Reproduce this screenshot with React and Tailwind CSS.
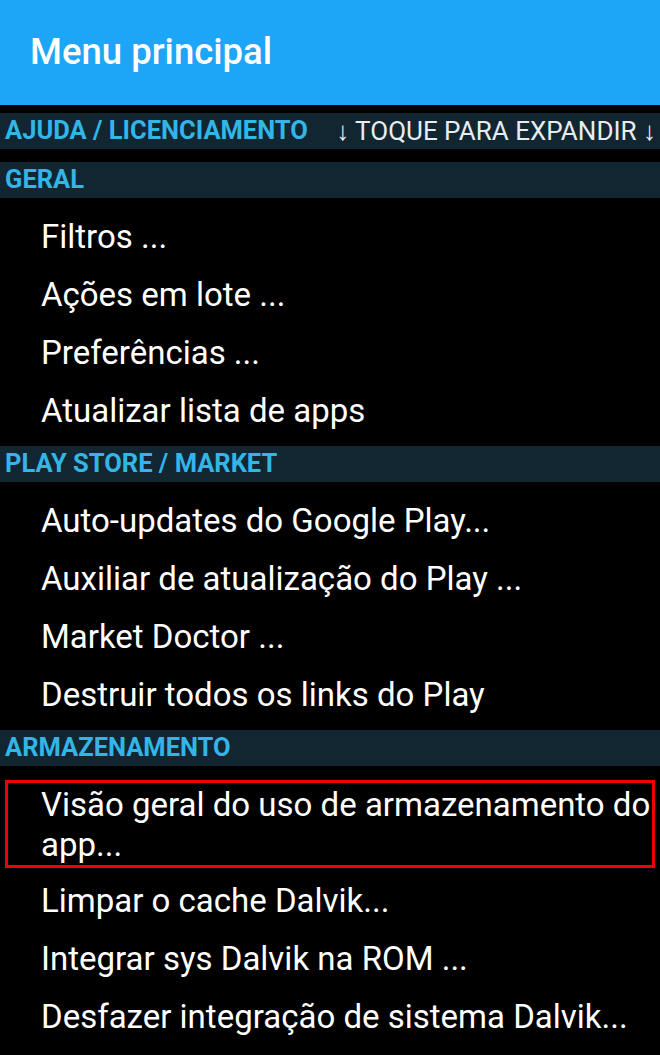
import React from "react";

const SECTIONS = [
  {
    title: "GERAL",
    items: ["Filtros ...", "Ações em lote ...", "Preferências ...", "Atualizar lista de apps"],
  },
  {
    title: "PLAY STORE / MARKET",
    items: [
      "Auto-updates do Google Play...",
      "Auxiliar de atualização do Play ...",
      "Market Doctor ...",
      "Destruir todos os links do Play",
    ],
  },
  {
    title: "ARMAZENAMENTO",
    items: [
      { lines: ["Visão geral do uso de armazenamento do", "app..."], marked: true },
      "Limpar o cache Dalvik...",
      "Integrar sys Dalvik na ROM ...",
      "Desfazer integração de sistema Dalvik...",
    ],
  },
];

const font = { fontFamily: "Roboto, 'Noto Sans', sans-serif" };

const Band = ({ children, right }) => (
  <div className="flex h-[36px] items-center justify-between bg-[#122631] pl-[5px] pr-[4px]">
    <span className="text-[25.5px] font-bold leading-none text-[#33b5e8]">{children}</span>
    {right && <span className="text-[26px] leading-none text-[#e6edf2]">{right}</span>}
  </div>
);

const Item = ({ item }) => {
  if (typeof item === "string") {
    return (
      <div className="whitespace-nowrap py-[9px] pl-[41px] text-[33px] leading-[40px] text-white">
        {item}
      </div>
    );
  }
  return (
    <div className="px-[5px] py-[4px]">
      <div className="border-[3px] border-[#f00000] pl-[33px] pt-[2px] text-[33px] leading-[40px] text-white">
        {item.lines.map((l) => (
          <div key={l} className="whitespace-nowrap">{l}</div>
        ))}
      </div>
    </div>
  );
};

export default function App() {
  return (
    <div className="h-[1055px] w-[660px] overflow-hidden bg-black" style={font}>
      <div className="flex h-[105px] items-center bg-[#1da5f7] pl-[30px]">
        <h1 className="text-[36.5px] font-medium text-white">Menu principal</h1>
      </div>
      <div className="pt-[8px]">
        <Band right="↓ TOQUE PARA EXPANDIR ↓">AJUDA / LICENCIAMENTO</Band>
      </div>
      <div className="pt-[13px]">
        {SECTIONS.map((s) => (
          <section key={s.title}>
            <Band>{s.title}</Band>
            <div className="pb-[6px] pt-[10px]">
              {s.items.map((it, i) => (
                <Item key={i} item={it} />
              ))}
            </div>
          </section>
        ))}
      </div>
    </div>
  );
}
